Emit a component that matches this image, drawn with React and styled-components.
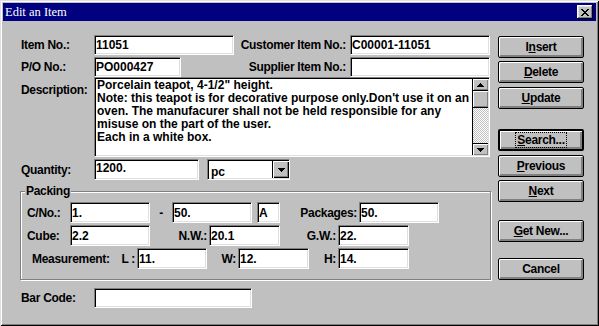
import React from 'react';
import styled, { createGlobalStyle } from 'styled-components';

const Global = createGlobalStyle`
  html, body { margin: 0; padding: 0; background: #c0c0c0; }
  body { width: 599px; height: 326px; overflow: hidden; }
  * { box-sizing: border-box; }
`;

const Window = styled.div`
  width: 599px;
  height: 326px;
  background: #c0c0c0;
  padding: 3px;
  display: flex;
  flex-direction: column;
  box-shadow: inset 1px 1px 0 #dfdfdf, inset -1px -1px 0 #000, inset 2px 2px 0 #fff, inset -2px -2px 0 #808080;
  font-family: "Liberation Sans", Arial, sans-serif;
  font-weight: bold;
  font-size: 12px;
  letter-spacing: -0.3px;
  color: #000;
`;

const TitleBar = styled.div`
  height: 18px;
  flex: none;
  background: #000080;
  display: flex;
  align-items: center;
  justify-content: space-between;
  padding: 0 3px 0 2px;
`;

const Title = styled.span`
  font-family: "Liberation Serif", "Times New Roman", serif;
  font-weight: normal;
  font-size: 12.5px;
  letter-spacing: 0;
  color: #fff;
`;

const CloseButton = styled.span`
  width: 16px;
  height: 14px;
  background: #c0c0c0;
  display: flex;
  align-items: center;
  justify-content: center;
  box-shadow: inset -1px -1px 0 #000, inset 1px 1px 0 #fff, inset -2px -2px 0 #808080, inset 2px 2px 0 #dfdfdf;
`;

const Body = styled.div`
  flex: 1;
  display: flex;
  gap: 7px;
  padding: 14px 12px 0 17px;
`;

const FormColumn = styled.div`
  width: 471px;
  flex: none;
  display: flex;
  flex-direction: column;
`;

const ButtonColumn = styled.div`
  width: 86px;
  flex: none;
  display: flex;
  flex-direction: column;
`;

const Row = styled.div`
  display: flex;
  align-items: ${p => p.$align || 'center'};
  height: ${p => p.$h}px;
  margin-top: ${p => p.$mt || 0}px;
  flex: none;
`;

const Label = styled.span`
  width: ${p => p.$w}px;
  flex: none;
  padding-left: ${p => p.$pl || 0}px;
  padding-right: ${p => p.$pr || 0}px;
  padding-top: ${p => p.$pt || 0}px;
  text-align: ${p => (p.$right ? 'right' : p.$center ? 'center' : 'left')};
  white-space: nowrap;
`;

const sunken = `
  background: #fff;
  border-style: solid;
  border-width: 1px;
  border-color: #808080 #fff #fff #808080;
  box-shadow: inset 1px 1px 0 #000, inset -1px -1px 0 #dfdfdf;
`;

const TextBox = styled.input.attrs({ readOnly: true, type: 'text' })`
  ${sunken}
  width: ${p => p.$w}px;
  height: ${p => p.$h || 20}px;
  flex: none;
  margin: 0 0 0 ${p => p.$ml || 0}px;
  padding: 0 0 ${p => p.$pb || 0}px 1px;
  font: inherit;
  letter-spacing: 0;
  color: #000;
  outline: none;
  border-radius: 0;
`;

const Memo = styled.div`
  ${sunken}
  width: 396px;
  height: 80px;
  flex: none;
  display: flex;
  padding: 1px;
`;

const MemoText = styled.div`
  flex: 1;
  padding: 0 0 0 1px;
  line-height: 13px;
  letter-spacing: 0;
  overflow: hidden;
`;

const MemoLine = styled.div`
  white-space: nowrap;
`;

const ScrollBar = styled.div`
  width: 16px;
  flex: none;
  display: flex;
  flex-direction: column;
  border-left: 1px solid #000;
`;

const ScrollButton = styled.div`
  height: ${p => p.$h}px;
  flex: none;
  background: #c0c0c0;
  display: flex;
  align-items: center;
  justify-content: center;
  box-shadow: inset 1px 1px 0 #fff, inset -1px -1px 0 #808080;
  border-top: ${p => (p.$bt ? '1px solid #000' : 'none')};
  border-bottom: ${p => (p.$bb ? '1px solid #000' : 'none')};
`;

const ScrollTrack = styled.div`
  flex: 1;
  background: repeating-conic-gradient(#c0c0c0 0 25%, #fff 0 50%) 0 0 / 2px 2px;
`;

const Combo = styled.div`
  ${sunken}
  width: 83px;
  height: 21px;
  margin-left: 8px;
  flex: none;
  display: flex;
  padding: 1px 0 1px 1px;
`;

const ComboValue = styled.span`
  flex: 1;
  padding: 4px 0 0 2px;
  letter-spacing: 0;
`;

const ComboButton = styled.span`
  width: 17px;
  flex: none;
  background: #c0c0c0;
  display: flex;
  align-items: center;
  justify-content: center;
  border-left: 1px solid #000;
  box-shadow: inset 1px 1px 0 #fff, inset -1px -1px 0 #000, inset -2px -2px 0 #808080;
`;

const Group = styled.div`
  position: relative;
  margin-top: ${p => p.$mt}px;
  border: 1px solid #808080;
  box-shadow: inset 1px 1px 0 #fff, 1px 1px 0 #fff;
  padding: 10px 0 10px 6px;
  display: flex;
  flex-direction: column;
`;

const Legend = styled.span`
  position: absolute;
  top: -8px;
  left: 4px;
  padding: 0 1px;
  background: #c0c0c0;
  line-height: 14px;
`;

const Button = styled.button`
  width: 86px;
  height: 22px;
  flex: none;
  margin: ${p => p.$mt}px 0 0 0;
  padding: 0;
  background: #c0c0c0;
  border: ${p => (p.$default ? '2px' : '1px')} solid #000;
  border-radius: 2px;
  box-shadow: inset 1px 1px 0 #fff, inset -1px -1px 0 #808080, inset -2px -2px 0 #808080;
  font: inherit;
  letter-spacing: inherit;
  color: #000;
  display: flex;
  align-items: center;
  justify-content: center;
  u { text-decoration: underline; text-underline-offset: 1px; }
`;

const Focus = styled.span`
  outline: 1px dotted #000;
  outline-offset: 0px;
  padding: 0 1px;
`;

const closePixels = [
  '11000011',
  '01100110',
  '00111100',
  '00011000',
  '00111100',
  '01100110',
  '11000011',
];

const CloseGlyph = () => (
  <svg width="8" height="7" viewBox="0 0 8 7" shapeRendering="crispEdges">
    {closePixels.flatMap((row, y) =>
      row.split('').map((c, x) => (c === '1' ? <rect key={`${x}-${y}`} x={x} y={y} width="1" height="1" fill="#000" /> : null))
    )}
  </svg>
);

const Arrow = ({ down }) => (
  <svg width="7" height="4" viewBox="0 0 7 4" shapeRendering="crispEdges">
    <polygon points={down ? '0,0 7,0 3.5,4' : '3.5,0 7,4 0,4'} fill="#000" />
  </svg>
);

export default function App() {
  return (
    <>
      <Global />
      <Window>
        <TitleBar>
          <Title>Edit an Item</Title>
          <CloseButton><CloseGlyph /></CloseButton>
        </TitleBar>
        <Body>
          <FormColumn>
            <Row $h={20}>
              <Label $w={74} $pl={1}>Item No.:</Label>
              <TextBox $w={140} defaultValue="11051" />
              <Label $w={116} $right $pr={4}>Customer Item No.:</Label>
              <TextBox $w={140} defaultValue="C00001-11051" />
            </Row>
            <Row $h={20} $mt={2}>
              <Label $w={74} $pl={1}>P/O No.:</Label>
              <TextBox $w={87} defaultValue="PO000427" />
              <Label $w={169} $right $pr={4}>Supplier Item No.:</Label>
              <TextBox $w={140} defaultValue="" />
            </Row>
            <Row $h={80} $align="flex-start">
              <Label $w={74} $pl={1} $pt={6}>Description:</Label>
              <Memo>
                <MemoText>
                  <MemoLine>Porcelain teapot, 4-1/2" height.</MemoLine>
                  <MemoLine>Note: this teapot is for decorative purpose only.Don't use it on an</MemoLine>
                  <MemoLine>oven. The manufacurer shall not be held responsible for any</MemoLine>
                  <MemoLine>misuse on the part of the user.</MemoLine>
                  <MemoLine>Each in a white box.</MemoLine>
                </MemoText>
                <ScrollBar>
                  <ScrollButton $h={12} $bb><Arrow /></ScrollButton>
                  <ScrollButton $h={17} $bb />
                  <ScrollTrack />
                  <ScrollButton $h={12} $bt><Arrow down /></ScrollButton>
                </ScrollBar>
              </Memo>
            </Row>
            <Row $h={21} $mt={2}>
              <Label $w={74} $pl={1}>Quantity:</Label>
              <TextBox $w={105} $h={21} $pb={3} defaultValue="1200." />
              <Combo>
                <ComboValue>pc</ComboValue>
                <ComboButton><Arrow down /></ComboButton>
              </Combo>
            </Row>
            <Group $mt={11}>
              <Legend>Packing</Legend>
              <Row $h={21}>
                <Label $w={43}>C/No.:</Label>
                <TextBox $w={80} $h={21} defaultValue="1." />
                <Label $w={22} $center>-</Label>
                <TextBox $w={80} $h={21} defaultValue="50." />
                <TextBox $w={23} $h={21} $ml={5} defaultValue="A" />
                <Label $w={79} $right $pr={2}>Packages:</Label>
                <TextBox $w={80} $h={21} defaultValue="50." />
              </Row>
              <Row $h={21} $mt={2}>
                <Label $w={43}>Cube:</Label>
                <TextBox $w={80} $h={21} defaultValue="2.2" />
                <Label $w={59} $right $pr={2}>N.W.:</Label>
                <TextBox $w={71} $h={21} defaultValue="20.1" />
                <Label $w={58} $right $pr={2}>G.W.:</Label>
                <TextBox $w={71} $h={21} defaultValue="22." />
              </Row>
              <Row $h={21} $mt={2}>
                <Label $w={93} $pl={5}>Measurement:</Label>
                <Label $w={17} $right $pr={2}>L :</Label>
                <TextBox $w={70} $h={21} defaultValue="11." />
                <Label $w={31} $right $pr={2}>W:</Label>
                <TextBox $w={71} $h={21} defaultValue="12." />
                <Label $w={29} $right $pr={2}>H:</Label>
                <TextBox $w={71} $h={21} defaultValue="14." />
              </Row>
            </Group>
            <Row $h={20} $mt={8}>
              <Label $w={74} $pl={1}>Bar Code:</Label>
              <TextBox $w={158} defaultValue="" />
            </Row>
          </FormColumn>
          <ButtonColumn>
            <Button $mt={1}>I<u>n</u>sert</Button>
            <Button $mt={3}><u>D</u>elete</Button>
            <Button $mt={4}><u>U</u>pdate</Button>
            <Button $mt={20} $default><Focus><u>S</u>earch...</Focus></Button>
            <Button $mt={4}><u>P</u>revious</Button>
            <Button $mt={3}><u>N</u>ext</Button>
            <Button $mt={18}><u>G</u>et New...</Button>
            <Button $mt={16}>Cancel</Button>
          </ButtonColumn>
        </Body>
      </Window>
    </>
  );
}
